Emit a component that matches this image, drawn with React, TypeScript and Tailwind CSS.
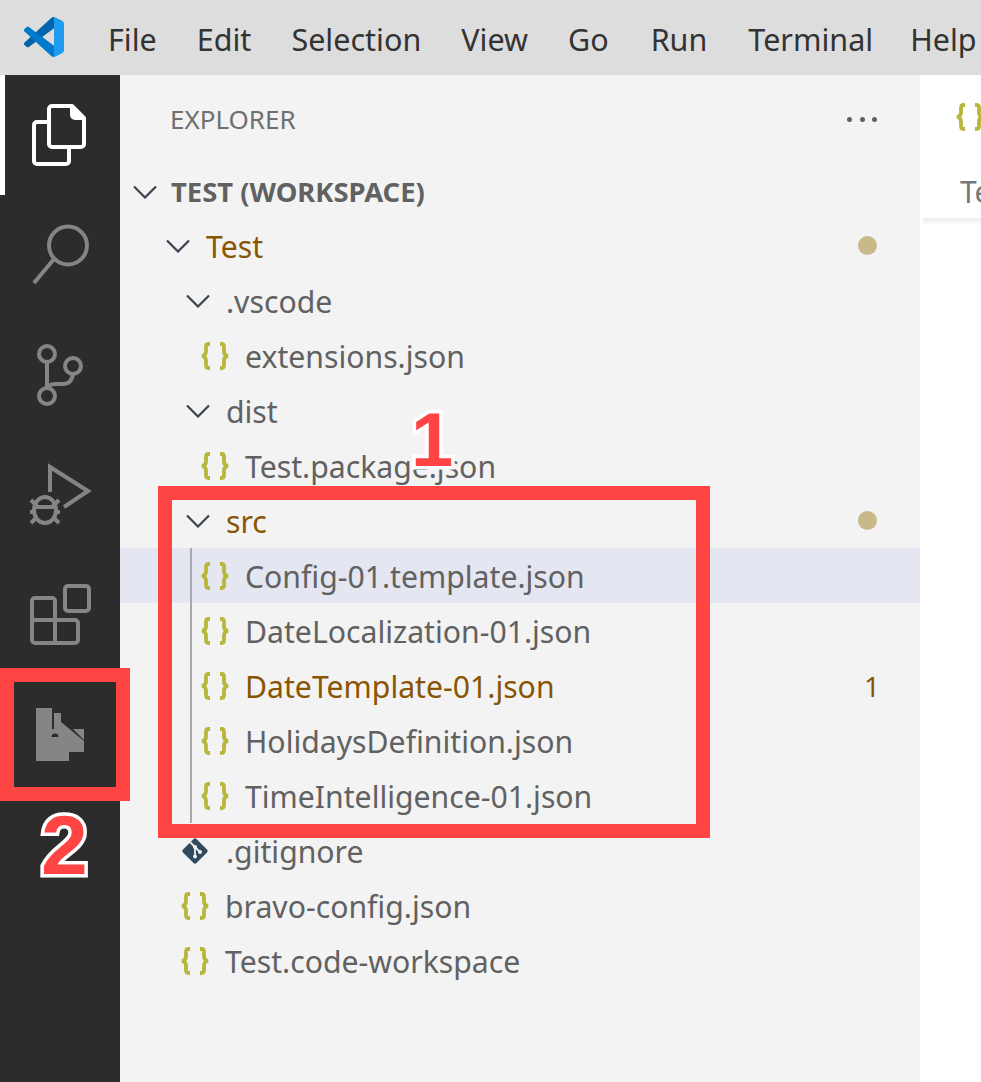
import React from "react";

const menuItems = [
  { label: "File", nudge: "" },
  { label: "Edit", nudge: "" },
  { label: "Selection", nudge: "" },
  { label: "View", nudge: "" },
  { label: "Go", nudge: "" },
  { label: "Run", nudge: "ml-[2px]" },
  { label: "Terminal", nudge: "ml-[1px]" },
  { label: "Help", nudge: "ml-[-3px]" },
];

type TreeRow = {
  label: string;
  kind: "folder" | "json" | "git";
  pad: string;
  tone?: string;
  dot?: boolean;
  badge?: string;
  selected?: boolean;
};

const topRows: TreeRow[] = [
  { label: "Test", kind: "folder", pad: "pl-[46px]", tone: "text-[#895503]", dot: true },
  { label: ".vscode", kind: "folder", pad: "pl-[66px]" },
  { label: "extensions.json", kind: "json", pad: "pl-[81px]" },
  { label: "dist", kind: "folder", pad: "pl-[66px]" },
  { label: "Test.package.json", kind: "json", pad: "pl-[81px]" },
  { label: "src", kind: "folder", pad: "pl-[66px]", tone: "text-[#895503]", dot: true },
];

const srcRows: TreeRow[] = [
  { label: "Config-01.template.json", kind: "json", pad: "pl-[81px]", selected: true },
  { label: "DateLocalization-01.json", kind: "json", pad: "pl-[81px]" },
  { label: "DateTemplate-01.json", kind: "json", pad: "pl-[81px]", tone: "text-[#895503]", badge: "1" },
  { label: "HolidaysDefinition.json", kind: "json", pad: "pl-[81px]" },
  { label: "TimeIntelligence-01.json", kind: "json", pad: "pl-[81px]" },
];

const bottomRows: TreeRow[] = [
  { label: ".gitignore", kind: "git", pad: "pl-[61px]" },
  { label: "bravo-config.json", kind: "json", pad: "pl-[61px]" },
  { label: "Test.code-workspace", kind: "json", pad: "pl-[61px]" },
];

const Chevron = () => (
  <svg viewBox="0 0 24 14" className="h-[14px] w-[24px] shrink-0" fill="none" stroke="#3b4250" strokeWidth="2.2">
    <path d="M1 1.5 12 12.5 23 1.5" />
  </svg>
);

const Braces = () => (
  <svg viewBox="0 0 28 28" className="h-[28px] w-[28px] shrink-0" fill="none" stroke="#b7b73b" strokeWidth="3.8">
    <path d="M9 2H7.5C5.500 2 5 3 5 5V9.500C5 12 4 13.500 1 14 4 14.500 5 16 5 18.500V23C5 25 5.500 26 7.500 26H9" />
    <path d="M19 2H20.500C22.500 2 23 3 23 5V9.500C23 12 24 13.500 27 14 24 14.500 23 16 23 18.500V23C23 25 22.500 26 20.500 26H19" />
  </svg>
);

const GitDiamond = () => (
  <svg viewBox="0 0 28 28" className="h-[28px] w-[28px] shrink-0">
    <rect x="4.500" y="4.500" width="19" height="19" rx="2" transform="rotate(45 14 14)" fill="#2f4a5f" />
    <path d="M9 5 14 10V19M14 10 19 15" stroke="#f3f3f3" strokeWidth="1.800" fill="none" />
    <circle cx="14" cy="10" r="2" fill="#f3f3f3" />
    <circle cx="19" cy="15" r="2" fill="#f3f3f3" />
    <circle cx="14" cy="19.500" r="2" fill="#f3f3f3" />
  </svg>
);

const VsCodeLogo = () => (
  <svg viewBox="0 0 100 100" className="h-[40px] w-[40px] shrink-0">
    <path fill="#0065A9" d="M96.46 10.8 75.86.87a6.23 6.23 0 0 0-7.1 1.2L1.35 63.57a4.17 4.17 0 0 0 0 6.16l5.5 5a4.17 4.17 0 0 0 5.32.24L93.4 14.33a4.13 4.13 0 0 1 6.6 3.2v-.24a6.25 6.25 0 0 0-3.54-5.63Z" />
    <path fill="#007ACC" d="M96.46 89.2 75.86 99.13a6.23 6.23 0 0 1-7.1-1.2L1.35 36.43a4.17 4.17 0 0 1 0-6.16l5.5-5a4.17 4.17 0 0 1 5.32-.24L93.4 85.67a4.13 4.13 0 0 0 6.6-3.2v.24a6.25 6.25 0 0 1-3.54 5.63Z" />
    <path fill="#1F9CF0" d="M75.86 99.13a6.23 6.23 0 0 1-7.1-1.2c2.3 2.3 6.24.67 6.24-2.6V4.67c0-3.27-3.94-4.9-6.24-2.6a6.23 6.23 0 0 1 7.1-1.2l20.6 9.91A6.25 6.25 0 0 1 100 16.4v67.2a6.25 6.25 0 0 1-3.54 5.63Z" />
  </svg>
);

const ActivityIcons = [
  // files
  <g key="files" stroke="#ffffff" strokeWidth="4" fill="none" strokeLinejoin="round">
    <path d="M52 31H72L84 43V69a3 3 0 0 1-3 3H52a3 3 0 0 1-3-3V34a3 3 0 0 1 3-3Z" />
    <path d="M72 31V40a3 3 0 0 0 3 3H84" fill="#ffffff" />
    <path d="M49 47H37a3 3 0 0 0-3 3V86a3 3 0 0 0 3 3H66a3 3 0 0 0 3-3V72" />
  </g>,
  // search
  <g key="search" stroke="#858585" strokeWidth="4" fill="none">
    <circle cx="68" cy="50.500" r="19" />
    <path d="M54 64 34 88" />
  </g>,
  // source control
  <g key="git" stroke="#858585" strokeWidth="4" fill="none">
    <circle cx="47" cy="39" r="8" />
    <circle cx="73" cy="51" r="8" />
    <circle cx="47" cy="81" r="8" />
    <path d="M47 47V73M73 59C72 66 68 69 63 69H56C51 69 47 70 47 75" />
  </g>,
  // run and debug
  <g key="debug" stroke="#858585" strokeWidth="4" fill="none">
    <path d="M50 57V32L88 56 64 72" />
    <ellipse cx="45" cy="75" rx="11" ry="13" />
    <path d="M35 72H55M31 65 37 71M59 65 53 71M30 77H35M60 77H55M31 88 37 82M59 88 53 82" />
  </g>,
  // extensions
  <g key="ext" stroke="#858585" strokeWidth="4" fill="none">
    <rect x="65" y="31" width="24" height="25" rx="3" />
    <path d="M55 65V46a3 3 0 0 0-3-3H35a3 3 0 0 0-3 3V85a3 3 0 0 0 3 3H75a3 3 0 0 0 3-3V68a3 3 0 0 0-3-3H32M55 65V88" />
  </g>,
  // bravo
  <g key="bravo">
    <path fill="#858585" d="M36 33H52V54H54V38H61V47L84 66V77H69V86H36Z" />
    <path fill="#858585" d="M73 54H84V65Z" />
    <path fill="#2c2c2c" d="M51.500 62a3.500 3.500 0 0 1 7 0Z" />
  </g>,
];

const Row = ({ row }: { row: TreeRow }) => (
  <div
    className={`flex h-[55px] items-center ${row.pad} pr-[43px] ${row.selected ? "bg-[#e4e6f1]" : ""}`}
  >
    {row.kind === "folder" && <Chevron />}
    {row.kind === "json" && <Braces />}
    {row.kind === "git" && <GitDiamond />}
    <span
      className={`${row.kind === "git" ? "ml-[17px]" : "ml-[16px]"} flex-1 whitespace-nowrap pt-[2px] text-[30.2px] leading-[53px] ${row.tone ?? "text-[#616161]"}`}
    >
      {row.label}
    </span>
    {row.dot && <span className="h-[19px] w-[19px] rounded-full bg-[#c9b98a]" />}
    {row.badge && <span className={`mr-[-3px] text-[28px] ${row.tone}`}>{row.badge}</span>}
  </div>
);

const App: React.FC = () => {
  return (
    <div className="relative flex h-[1082px] w-[981px] flex-col overflow-hidden bg-white font-['Noto_Sans','Open_Sans',sans-serif]">
      {/* Title bar */}
      <header className="flex h-[75px] shrink-0 items-center bg-[#dddddd] pl-[24px] pb-[2px]">
        <VsCodeLogo />
        <nav className="ml-[44px] flex gap-[40px] whitespace-nowrap pt-[6px] text-[30.5px] text-[#333333]">
          {menuItems.map((item) => (
            <span key={item.label} className={item.nudge}>
              {item.label}
            </span>
          ))}
        </nav>
      </header>

      <div className="flex flex-1">
        {/* Activity bar */}
        <aside className="w-[120px] shrink-0 bg-[#2c2c2c]">
          {ActivityIcons.map((icon, i) => (
            <div key={i} className="relative h-[120px]">
              {i === 0 && <div className="absolute left-0 top-0 h-[120px] w-[5px] bg-white" />}
              <svg viewBox="0 0 120 120" className="h-[120px] w-[120px]">
                {icon}
              </svg>
            </div>
          ))}
        </aside>

        {/* Explorer */}
        <section className="w-[800px] shrink-0 bg-[#f3f3f3]">
          <div className="flex h-[88px] items-center justify-between pl-[50px] pr-[43px]">
            <span className="text-[26px] text-[#6f6f6f]">EXPLORER</span>
            <span className="flex gap-[7.500px]">
              <span className="h-[5px] w-[5px] rounded-full bg-[#616161]" />
              <span className="h-[5px] w-[5px] rounded-full bg-[#616161]" />
              <span className="h-[5px] w-[5px] rounded-full bg-[#616161]" />
            </span>
          </div>

          <div className="flex h-[55px] items-center pl-[13px] pt-[2px]">
            <Chevron />
            <span className="ml-[14px] text-[27.400px] font-bold text-[#616161]">TEST (WORKSPACE)</span>
          </div>
          {topRows.map((row) => (
            <Row key={row.label} row={row} />
          ))}
          <div className="relative">
            <div className="absolute bottom-0 left-[70px] top-0 w-[2px] bg-[#a9a9a9]" />
            {srcRows.map((row) => (
              <Row key={row.label} row={row} />
            ))}
          </div>
          {bottomRows.map((row) => (
            <Row key={row.label} row={row} />
          ))}
        </section>

        {/* Editor */}
        <main className="min-w-0 flex-1 bg-white">
          <div className="h-[143px] overflow-hidden pl-[36px] pt-[28px]">
            <Braces />
            <div className="ml-[4px] mt-[41px] text-[30px] leading-[40px] text-[#777777]">Test</div>
          </div>
          <div className="ml-[3px] h-[8px] bg-gradient-to-b from-[#ececec] to-white" />
        </main>
      </div>

      {/* Annotations */}
      <div className="absolute left-[158px] top-[486px] h-[352px] w-[552px] border-[14px] border-[#ff4444]" />
      <div className="absolute left-0 top-[668px] h-[133px] w-[130px] border-[14px] border-[#ff4444]" />
      <span className="absolute left-[411px] top-[396px] font-['Liberation_Sans',sans-serif] text-[76px] font-bold leading-[88px] text-[#ff4444] [-webkit-text-stroke:7px_white] [paint-order:stroke_fill]">
        1
      </span>
      <span className="absolute left-[41px] top-[798px] font-['Liberation_Sans',sans-serif] text-[84px] font-bold leading-[94px] text-[#ff4444] [-webkit-text-stroke:7px_white] [paint-order:stroke_fill]">
        2
      </span>
    </div>
  );
};

export default App;
